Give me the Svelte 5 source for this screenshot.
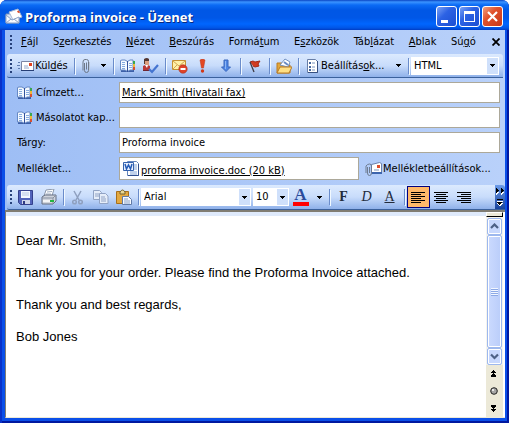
<script>
  const menus = [
    ['', 'F', 'ájl'], ['S', 'z', 'erkesztés'], ['', 'N', 'ézet'], ['', 'B', 'eszúrás'],
    ['Formá', 't', 'um'], ['E', 's', 'zközök'], ['Táb', 'l', 'ázat'], ['', 'A', 'blak'], ['Sú', 'g', 'ó']
  ];
  let message = $state(
    'Dear Mr. Smith,\n\nThank you for your order. Please find the Proforma Invoice attached.\n\nThank you and best regards,\n\nBob Jones'
  );
  let to = $state('Mark Smith (Hivatali fax)');
  let cc = $state('');
  let subject = $state('Proforma invoice');
</script>

{#snippet arrow()}
  <svg class="arrow" width="5" height="3" viewBox="0 0 5 3"><path d="M0 0h5v1H4v1H3v1H2V2H1V1H0z" /></svg>
{/snippet}

{#snippet book()}
  <svg width="16" height="16" viewBox="0 0 16 16">
    <path d="M1 3h13v11H1z" fill="#3c5fa8" />
    <path d="M0.5 2.5 2 2h3l2.5 1.5L10 2h3v10h-3l-2.5 1.5L5 12H.5z" fill="#f4f9ff" stroke="#6689c4" />
    <path d="M7 3h1v11H7z" fill="#31519b" />
    <path d="M2 4h3v1H2zm0 2h3v1H2zm0 2h3v1H2zm0 2h3v1H2zM9 5h3v1H9zm0 2h3v1H9zm0 2h3v1H9z" fill="#86abdf" />
    <path d="M13 3h2v3h-2z" fill="#3ba652" /><path d="M13 6h2v3h-2z" fill="#f0b638" /><path d="M13 9h2v3h-2z" fill="#d65032" />
  </svg>
{/snippet}

{#snippet clip()}
  <svg width="9" height="16" viewBox="0 0 9 16" fill="none">
    <path d="M2.5 5v7.5Q2.500 14.500 4.500 14.500T6.500 12.500V3.500Q6.500 1.500 4.500 1.500H3Q1 1.500 1 4v8.500M4.500 4.500v7" stroke="#6d7888" />
    <path d="M7.500 4v9" stroke="#bac8dc" />
  </svg>
{/snippet}

{#snippet grip()}
  <span class="grip"></span>
{/snippet}

{#snippet lines(kind)}
  <svg width="15" height="11" viewBox="0 0 15 11" shape-rendering="crispEdges">
    {#each [0, 1, 2, 3, 4, 5] as i}
      {@const w = i % 2 ? 10 : 14}
      <rect x={kind === 'left' ? 0 : kind === 'right' ? 14 - w : (14 - w) / 2} y={i * 2} width={w} height="1" />
    {/each}
  </svg>
{/snippet}

<main class="window">
  <header class="title">
    <svg width="18" height="18" viewBox="0 0 18 18">
      <path d="M1 6h10l3 4v5H1z" fill="#dce6f5" stroke="#7893bd" />
      <path d="m4 4 9-3 4 8-9 3z" fill="#fff" stroke="#a6b7d4" />
      <path d="m12 3 2-.5 1 2-2 .5z" fill="#e14c29" />
      <path d="m1 7 6 5 7-3v6H1z" fill="#f7faff" stroke="#8aa0c5" />
      <path d="m1 15 5-4m8 4-5-4" stroke="#8aa0c5" />
    </svg>
    <h1>Proforma invoice - Üzenet</h1>
    <button class="win" aria-label="Kis méret"><svg width="19" height="19"><path d="M4 13h7v3H4z" fill="#fff" /></svg></button>
    <button class="win" aria-label="Teljes méret"><svg width="19" height="19"><path d="M4 4h11v11H4zm1 3v7h9V7z" fill="#fff" fill-rule="evenodd" /></svg></button>
    <button class="win close" aria-label="Bezárás"><svg width="19" height="19"><path d="m5 5 9 9m0-9-9 9" stroke="#fff" stroke-width="2.200" /></svg></button>
  </header>

  <div class="client">
    <nav class="menu">
      {@render grip()}
      <div class="items">
        {#each menus as [a, k, b]}
          <button>{a}<u>{k}</u>{b}</button>
        {/each}
      </div>
      <button class="x" aria-label="Üzenet bezárása"><svg width="8" height="8"><path d="m.5.500 7 7m0-7-7 7" stroke="#000" stroke-width="1.800" /></svg></button>
    </nav>

    <div class="toolbar">
      {@render grip()}
      <button class="send">
        <svg width="17" height="16" viewBox="0 0 17 16">
          <path d="M4.500 3.500h12v9h-12z" fill="#fff" stroke="#7c87a4" /><path d="M4 12.500h13" stroke="#263e75" />
          <path d="M12 5h3v3h-3z" fill="#e2421f" /><path d="M7 8h4m-4 2h5" stroke="#96aacb" />
          <path d="M1 4.500h2M0 7.500h3M1 10.500h2" stroke="#607db1" />
        </svg>
        <span>Kül<u>d</u>és</span>
      </button>
      <i class="sep"></i>
      <button class="narrow" aria-label="Fájl beszúrása">{@render clip()}</button>
      <button class="drop" aria-label="Beszúrás menü">{@render arrow()}</button>
      <i class="sep"></i>
      <button class="tool" aria-label="Címjegyzék">{@render book()}</button>
      <button class="tool" aria-label="Névellenőrzés">
        <svg width="18" height="16" viewBox="0 0 18 16">
          <path d="M2 1q3-2 5 0v5H2z" fill="#553832" /><path d="M3 3h4v4H3z" fill="#dc9e80" />
          <path d="M1 8q3-2 7 0v5H1z" fill="#b83838" /><path d="m3 7 2 3 1-3z" fill="#fff" /><path d="M1 12h7v1H1z" fill="#6f2431" />
          <path d="m7 11 3 3 6-7" fill="none" stroke="#4474d0" stroke-width="2.200" />
        </svg>
      </button>
      <i class="sep"></i>
      <button class="tool" aria-label="Engedély">
        <svg width="16" height="16" viewBox="0 0 16 16">
          <path d="M.5 2.500h13v9H.5z" fill="#fff1a8" stroke="#c59134" /><path d="m1 3 6 5 6-5M1 11l4-4m8 4L9 7" fill="none" stroke="#d3a650" />
          <circle cx="11" cy="11" r="4.200" fill="#df4328" stroke="#a92e1c" stroke-width=".6" /><path d="M8.500 10h5v2h-5z" fill="#fff" />
        </svg>
      </button>
      <button class="tool" aria-label="Sürgős">
        <svg width="7" height="14" viewBox="0 0 7 14"><path d="M1 1q2.500-2 5 0L4.500 9h-2z" fill="#e34824" stroke="#bd3419" stroke-width=".5" /><circle cx="3.500" cy="12" r="1.700" fill="#d13817" /></svg>
      </button>
      <button class="tool" aria-label="Nem sürgős">
        <svg width="10" height="14" viewBox="0 0 10 14"><path d="M3 1h4v7h2.500L5 12.500.5 8H3z" fill="#4e86e4" stroke="#3867bd" /><path d="M4 2h1v8H4z" fill="#8cb5f5" /></svg>
      </button>
      <i class="sep"></i>
      <button class="tool" aria-label="Jelölő">
        <svg width="12" height="14" viewBox="0 0 12 14"><path d="m1 3 3-1 2 1 5-1-2 3 1 2-4 1-2-1" fill="#d23b20" stroke="#a52915" /><path d="m1 3 4 10" stroke="#3e3a45" stroke-width="1.300" /></svg>
      </button>
      <i class="sep"></i>
      <button class="tool" aria-label="Mentés mappába">
        <svg width="16" height="16" viewBox="0 0 16 16">
          <path d="M1 5h5l1 2h7v8H1z" fill="#e3a73a" stroke="#ba7b20" /><path d="m4 7 5-6 5 3-2 5z" fill="#fff" stroke="#7191c2" /><path d="m8 4 4 3" stroke="#688ac3" stroke-width="2" />
          <path d="M4 9h12l-3 6H1z" fill="#ffdf83" stroke="#b77b27" />
        </svg>
      </button>
      <i class="sep"></i>
      <button class="options">
        <svg width="13" height="16" viewBox="0 0 13 16">
          <path d="M1.500 1.500h8l2 2v11h-10z" fill="#fff" stroke="#687ea6" /><path d="M11.500 3v11.500H2" stroke="#364f80" fill="none" />
          <path d="M3 4h2v2H3zm0 4h2v2H3zm0 3h2v2H3z" fill="#47679d" /><path d="M6 5h3M6 9h3m-3 3h3" stroke="#7893be" />
        </svg>
        <span>Beállítás<u>o</u>k...</span>
      </button>
      <button class="drop" aria-label="Beállítások menü">{@render arrow()}</button>
      <i class="sep"></i>
      <span class="combo format"><select aria-label="Üzenetformátum"><option>HTML</option></select><b>{@render arrow()}</b></span>
    </div>

    <form class="fields" onsubmit={(e) => e.preventDefault()}>
      <label for="to">{@render book()}Címzett...</label>
      <input id="to" class="resolved" bind:value={to} />
      <label for="cc">{@render book()}Másolatot kap...</label>
      <input id="cc" bind:value={cc} />
      <label for="subject">Tárgy:</label>
      <input id="subject" bind:value={subject} />
      <span class="caption" id="files">Melléklet...</span>
      <div class="attachments">
        <div class="box" role="group" aria-labelledby="files">
          <svg width="17" height="17" viewBox="0 0 17 17">
            <path d="M4.500 1.500h9l2 2v12h-11z" fill="#fff" stroke="#6586be" /><path d="M15.500 4v11.500H5" stroke="#304f8e" fill="none" />
            <path d="M11 5h3m-3 2h3m-3 2h3m-7 3h7m-7 2h7" stroke="#83a4d7" />
            <path d="M.5 2.500h10v8H.5z" fill="#eaf1ff" stroke="#3562ad" /><path d="m2 4 1.500 5 2-4 2 4L9 4" fill="none" stroke="#245bb6" stroke-width="1.500" />
          </svg>
          <a href="#invoice">proforma invoice.doc (20 kB)</a>
        </div>
        <button class="attach" type="button">
          <svg width="17" height="16" viewBox="0 0 17 16">
            <path d="m6.500 3.500 8-2 2 1v9H6.500z" fill="#fff" stroke="#6a82ae" /><path d="M12 4h3v3h-3z" fill="#df4d2a" /><path d="M9 9h5" stroke="#8098bd" /><path d="M7 11h10v2H7z" fill="#3d65ad" />
            <path d="M2.500 6v6q0 2.500 2 2.500t2-2.500V5q0-2-2-2T1 5v7m3.500-6v6" fill="none" stroke="#6e7c91" />
          </svg>
          <span>Mellékletbeállítások...</span>
        </button>
      </div>
    </form>

    <div class="toolbar styles">
      {@render grip()}
      <button class="tool" aria-label="Mentés">
        <svg width="15" height="15" viewBox="0 0 15 15"><path d="M.5.500h14v14h-12l-2-2z" fill="#5263bb" stroke="#34408c" /><path d="M3 1h9v7H3z" fill="#f2f6ff" /><path d="M4 3h7M4 5h7" stroke="#b6c5e2" /><path d="M4 10h8v4H4z" fill="#cfd6ea" /><path d="M5 11h2v3H5z" fill="#303b82" /></svg>
      </button>
      <button class="tool" aria-label="Nyomtatás">
        <svg width="16" height="16" viewBox="0 0 16 16"><path d="m5 1 8-1-2 7H3z" fill="#fff" stroke="#8b98ac" /><path d="m6 3 5-.5M5 5h5" stroke="#9eacc0" /><path d="m1 8 3-2h11v6l-3 3H1z" fill="#d0d4dc" stroke="#646f82" /><path d="m1 9 11 0 3-3m-3 3v6" stroke="#8791a1" fill="none" /><path d="M2 11h9v2H2z" fill="#f4f5f7" /><path d="M9 11h4v2H9z" fill="#22b540" /></svg>
      </button>
      <i class="sep"></i>
      <button class="tool" aria-label="Kivágás">
        <svg width="11" height="15" viewBox="0 0 11 15" fill="none" stroke="#8fa0bf" stroke-width="1.500"><path d="m2 1 5 9m2-9L4 10" /><circle cx="2.500" cy="12" r="1.800" /><circle cx="8.500" cy="12" r="1.800" /></svg>
      </button>
      <button class="tool" aria-label="Másolás">
        <svg width="16" height="14" viewBox="0 0 16 14" fill="#e5edf9" stroke="#91a3c4"><path d="M.5.500h6l2 2v7h-8z" /><path d="M2 4h4M2 6h4" /><path d="M6.500 3.500h6l2.500 2.500v7.500H6.500z" /><path d="M8 7h4m-4 2h5m-5 2h5" /></svg>
      </button>
      <button class="tool" aria-label="Beillesztés">
        <svg width="16" height="16" viewBox="0 0 16 16"><path d="M.5 2.500h12v12H.5z" fill="#e3a941" stroke="#a8701c" /><path d="M4 3q2.500-4 5 0v2H4z" fill="#e9d795" stroke="#73622f" /><path d="M6.500 7.500h6l3 3v5h-9z" fill="#f7faff" stroke="#607aa7" /><path d="M8 10h4m-4 2h6m-6 2h6" stroke="#8aa1c7" /></svg>
      </button>
      <i class="sep"></i>
      <span class="combo font"><select aria-label="Betűtípus"><option>Arial</option></select><b>{@render arrow()}</b></span>
      <span class="combo size"><select aria-label="Betűméret"><option>10</option></select><b>{@render arrow()}</b></span>
      <button class="tool color" aria-label="Betűszín"><strong>A</strong></button>
      <button class="drop" aria-label="Betűszín menü">{@render arrow()}</button>
      <i class="sep"></i>
      <button class="tool letter" aria-label="Félkövér"><b>F</b></button>
      <button class="tool letter" aria-label="Dőlt"><em>D</em></button>
      <button class="tool letter" aria-label="Aláhúzott"><u>A</u></button>
      <i class="sep"></i>
      <button class="tool on" aria-label="Balra zárt">{@render lines('left')}</button>
      <button class="tool" aria-label="Középre zárt">{@render lines('center')}</button>
      <button class="tool" aria-label="Jobbra zárt">{@render lines('right')}</button>
      <button class="more" aria-label="Eszköztár beállításai">
        <svg width="8" height="18" viewBox="0 0 8 18" shape-rendering="crispEdges"><path d="M0 1h1v1h1v1h1v1H2v1H1v1H0zM5 1h1v1h1v1h1v1H7v1H6v1H5zM1 12h6v1H1zM1 14h6v1H6v1H5v1H3v-1H2v-1H1z" fill="#fff" transform="translate(0 1)" /><path d="M0 0h1v1h1v1h1v1H2v1H1v1H0zM5 0h1v1h1v1h1v1H7v1H6v1H5zM1 11h6v1H1zM1 14h5v1H5v1H4v1H3v-1H2v-1H1z" /></svg>
      </button>
    </div>

    <section class="editor">
      <textarea aria-label="Üzenet" bind:value={message}></textarea>
      <div class="scroll">
        <span class="split"></span>
        <button class="knob" aria-label="Fel"><svg width="9" height="7"><path d="m1 5 3.500-3.500L8 5" /></svg></button>
        <span class="thumb"><i></i></span>
        <button class="knob" aria-label="Le"><svg width="9" height="7"><path d="m1 1.500 3.500 3.500L8 1.500" /></svg></button>
        <div class="browse">
          <button aria-label="Előző"><svg width="5" height="7" shape-rendering="crispEdges"><path d="M2 0h1v1h1v1h1v1H3v1h1v1h1v2H0V5h1V4h1V3H0V2h1V1h1z" /></svg></button>
          <button aria-label="Tallózás"><svg width="8" height="8"><circle cx="4" cy="4" r="3.300" fill="#a5a5a5" stroke="#222" /><circle cx="3" cy="3" r="1" fill="#fff" /></svg></button>
          <button aria-label="Következő"><svg width="5" height="7" shape-rendering="crispEdges"><path d="M2 7h1V6h1V5h1V4H3V3h1V2h1V0H0v2h1v1h1v1H0v1h1v1h1z" /></svg></button>
        </div>
      </div>
    </section>
  </div>
</main>

<style>
  :global(body) { background: #fff; }
  * { box-sizing: border-box; }
  .window {
    min-height: 100vh; display: flex; flex-direction: column; padding: 0 4px 5px 5px;
    font: 11px/14px "DejaVu Sans Condensed", "DejaVu Sans", sans-serif; color: #000;
    background: #0a4fe8; border-radius: 7px 7px 0 0;
    box-shadow: inset 2px 0 #0831c9, inset -2px -2px #00189f;
  }
  button { font: inherit; color: inherit; border: 0; background: none; padding: 0; margin: 0; display: flex; align-items: center; justify-content: center; white-space: nowrap; }
  svg { flex: none; display: block; }
  u { text-underline-offset: 1px; }
  .title {
    height: 30px; margin: 0 -4px 0 -5px; padding: 3px 6px 0 5px; display: flex; align-items: center; gap: 2px;
    border-radius: 7px 7px 0 0;
    background: linear-gradient(#0a45c4, #3a93ff 2px, #0b6bf5 5px, #0057e5 10px, #0057e7 18px, #0066ff 24px, #0055e6 28px, #003cc2);
  }
  h1 { flex: 1; margin: 0; font: bold 13px/18px "Open Sans", "Noto Sans", sans-serif; color: #fff; text-shadow: 1px 1px #0a2a80; white-space: nowrap; }
  .win { width: 21px; height: 21px; border: 1px solid #fff; border-radius: 3px; background: linear-gradient(135deg, #7ba2f5, #2c62e4 40%, #1b4ed2); }
  .close { background: linear-gradient(135deg, #f0a080, #e0512c 40%, #c6381a); }
  .client { flex: 1; display: flex; flex-direction: column; background: linear-gradient(90deg, #9ebef5, #b9d1fa); }
  .menu { height: 24px; display: flex; align-items: center; padding: 0 5px; }
  .items { flex: 1; display: flex; justify-content: space-between; margin: 0 15px 0 7px; }
  .x { width: 9px; height: 16px; }
  .grip { width: 3px; height: 14px; margin-right: 1px; flex: none; background: repeating-linear-gradient(#27417a 0 2px, transparent 2px 4px) 0 0 / 2px 14px no-repeat; }
  .toolbar {
    height: 24px; display: flex; align-items: center; flex: none; margin: 0 2px; padding: 0 4px 0 3px;
    background: linear-gradient(#dceafe, #c8dcfb 50%, #8fb1ea); border-bottom: 1px solid #3b619c; border-radius: 3px 3px 0 2px;
  }
  .toolbar > * { flex: none; }
  .sep { width: 1px; height: 16px; margin: 0 2px 0 3px; background: #6a8ccb; box-shadow: 1px 1px #f1f9ff; }
  .tool { width: 23px; height: 22px; }
  .narrow { width: 19px; }
  .drop { width: 14px; height: 20px; }
  .send { width: 57px; gap: 1px; }
  .toolbar > .options { flex: 1 0 auto; justify-content: flex-start; padding-left: 5px; gap: 2px; }
  .combo { position: relative; height: 18px; }
  .combo select { appearance: none; width: 100%; height: 18px; border: 0; margin: 0; padding: 0 14px 0 3px; border-radius: 0; background: #fff; color: #000; font: inherit; display: block; }
  .combo b { position: absolute; inset: 1px 1px 1px auto; width: 11px; background: #cfe0fb; display: flex; align-items: center; justify-content: center; pointer-events: none; }
  .format { width: 88px; }
  .font { width: 110px; margin-right: 2px; }
  .size { width: 36px; }
  .fields { display: grid; grid-template-columns: 102px 1fr; align-items: center; row-gap: 4px; padding: 4px 5px 5px 12px; }
  .fields label { display: flex; align-items: center; gap: 3px; white-space: nowrap; }
  .fields input { width: 100%; height: 21px; border: 1px solid #aca899; background: #fff; padding: 0 2px; margin: 0; font: inherit; border-radius: 0; }
  .fields .resolved { text-decoration: underline; }
  .attachments { display: flex; gap: 6px; }
  .box { flex: 1; height: 23px; display: flex; align-items: center; gap: 1px; background: #fff; border: 1px solid #aca899; padding-left: 3px; }
  .box a { color: #000; padding-top: 4px; white-space: nowrap; }
  .attach { width: 135px; gap: 1px; justify-content: flex-start; }
  .styles { height: 25px; margin-right: 0; padding-right: 0; }
  .color strong { font: bold 17px/14px "Liberation Serif", serif; color: #2b4c9c; border-bottom: 4px solid red; width: 16px; }
  .letter { font: 14px/18px "Liberation Serif", serif; color: #222b3c; }
  .on { background: #ffb96a; border: 1px solid #000080; }
  .toolbar > .more { margin-left: auto; width: 10px; height: 24px; background: linear-gradient(#6c9be8, #17439c); border-radius: 0 3px 0 0; }
  .editor { flex: 1; display: flex; border-top: 2px solid #807d73; border-left: 1px solid #807d73; border-bottom: 1px solid #ece9d8; background: #fff; min-height: 200px; }
  textarea {
    flex: 1; min-width: 0; border: 0; border-top: 4px solid #dfeafb; resize: none; outline: 0; margin: 0; padding: 17px 10px;
    font: 13px/16px "Liberation Sans", Arial, sans-serif; color: #000; background: #fff; overflow: hidden; border-radius: 0; display: block;
  }
  .scroll { width: 19px; display: flex; flex-direction: column; background: #f5f4ee; border-right: 2px solid #fff; }
  .split { height: 5px; background: #ece9d8; border: 1px solid #fff; border-right-color: #000; border-bottom-color: #000; margin-bottom: 1px; }
  .knob { height: 17px; margin: 0 1px; border: 1px solid #9db8ee; border-radius: 2px; background: #c8d8fd; box-shadow: inset 0 0 0 1px #fff; }
  .knob path { fill: none; stroke: #4d6185; stroke-width: 2.200; }
  .thumb { flex: 1; margin: 0 1px; display: flex; align-items: center; justify-content: center; border: 1px solid #9db8ee; border-radius: 2px; background: linear-gradient(90deg, #cbdafe, #bacdfa); box-shadow: inset 0 0 0 1px #fff; }
  .thumb i { width: 7px; height: 8px; background: repeating-linear-gradient(#f3f7ff 0 1px, #8ca9e6 1px 2px); }
  .browse { height: 52px; display: flex; flex-direction: column; background: #ece9d8; justify-content: space-around; align-items: stretch; }
  .browse button { height: 16px; padding-right: 2px; }
</style>
